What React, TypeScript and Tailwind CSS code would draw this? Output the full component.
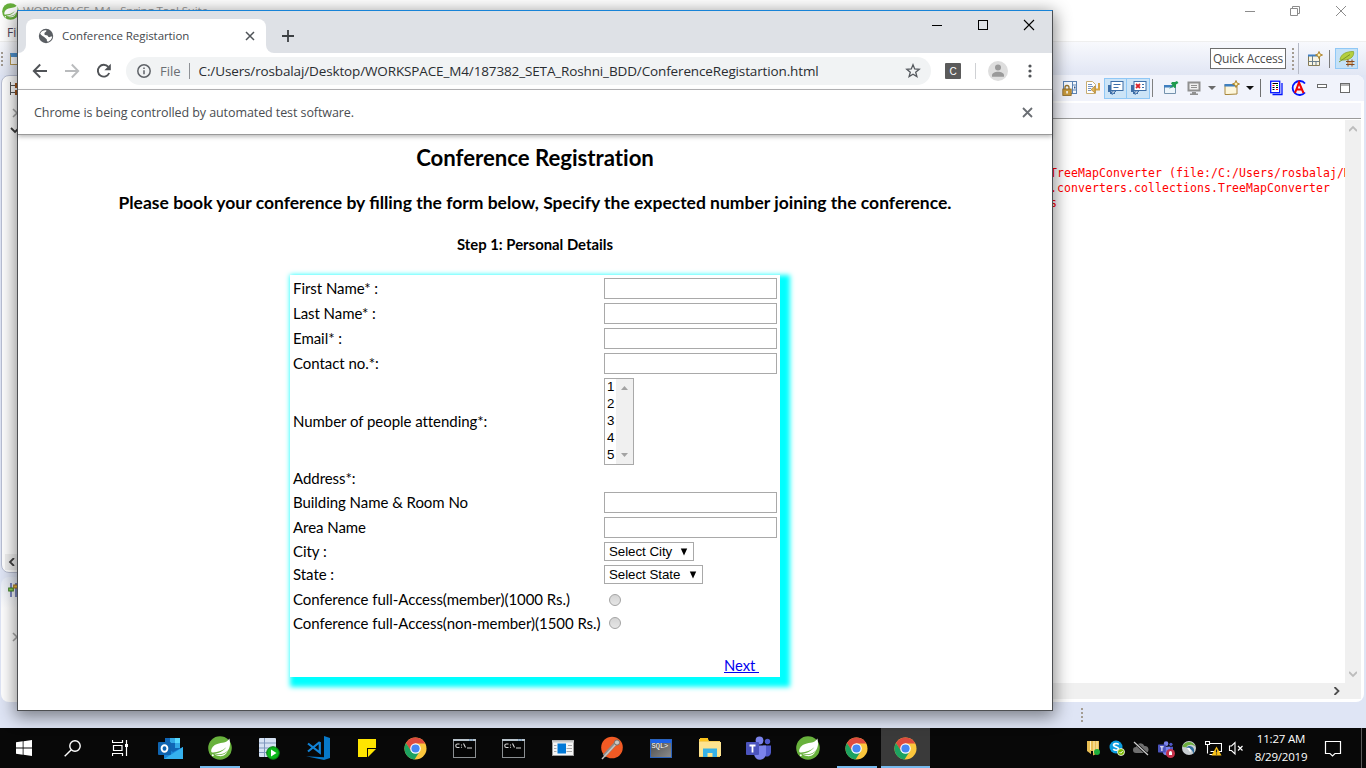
import type { ReactNode } from "react";

type SvgProps = { size?: number; box?: number; className?: string; children: ReactNode };

function Svg({ size = 16, box = 16, className = "", children }: SvgProps) {
  return (
    <svg width={size} height={size} viewBox={`0 0 ${box} ${box}`} fill="none" className={`block shrink-0 ${className}`}>
      {children}
    </svg>
  );
}

/* ---------- shared logos ---------- */

function SpringLogo({ size = 24 }: { size?: number }) {
  return (
    <Svg size={size} box={24}>
      <circle cx="12" cy="12" r="11.8" fill="#68b13c" />
      <path d="M21.4 2.6c.5 2.6 1.4 6.800-.6 10.400-2.500 4.700-8 5.600-12.400 5.300-1.600-.1-2.800-.3-2.800-.3 4.700-.5 9.700-2.600 12.600-6.800-3.400 3.300-8.300 4.900-13 5.200-.8.100-1.900 0-2-.9-.3-3.600 2.600-6.600 6-7.600 4.700-1.400 9.400-.3 12.200-5.300z" fill="#fff" />
      <path d="M6.500 18.200c5 1.800 10.500.8 13.300-3.400-1.500 4.500-6.500 7.500-13.300 3.400z" fill="#fff" />
      <circle cx="4.800" cy="19.300" r="1" fill="#fff" />
    </Svg>
  );
}

function ChromeLogo() {
  return (
    <Svg size={23} box={24}>
      <circle cx="12" cy="12" r="11.500" fill="#fbc63c" />
      <path d="M12 .5A11.500 11.500 0 0 0 2 6.300L7.200 15 12 6.800h10.300A11.500 11.500 0 0 0 12 .5z" fill="#dd4b3e" />
      <path d="M2 6.300A11.500 11.500 0 0 0 11 23.500L16.600 14.700 7.400 14.700z" fill="#1da261" />
      <circle cx="12" cy="12" r="5.500" fill="#fff" />
      <circle cx="12" cy="12" r="4.300" fill="#4587f3" />
    </Svg>
  );
}

function TeamsLogo({ size = 25 }: { size?: number }) {
  return (
    <Svg size={size} box={25}>
      <circle cx="13.500" cy="4.500" r="3.900" fill="#7b83eb" />
      <circle cx="21.500" cy="5.500" r="2.700" fill="#5059c9" />
      <path d="M17 9.500h8v7a4 4 0 0 1-6 3.500z" fill="#5059c9" />
      <path d="M8 9.500h12v8a6 6 0 0 1-12 .5z" fill="#7b83eb" />
      <rect x="0" y="6" width="13" height="13" rx="1" fill="#4b53bc" />
      <path d="M3.500 9.500h6M6.500 9.500v7" stroke="#fff" strokeWidth="1.800" />
    </Svg>
  );
}

/* ---------- IDE behind the browser ---------- */

function DropArrow({ color }: { color: string }) {
  return (
    <Svg size={8} box={8}>
      <path d="M0 2h8L4 6z" fill={color} />
    </Svg>
  );
}

function GripDots({ count, className = "" }: { count: number; className?: string }) {
  return (
    <div className={`flex flex-col gap-[2px] ${className}`}>
      {Array.from({ length: count }, (_, i) => (
        <span key={i} className="block size-[2px] bg-[#a39c92]" />
      ))}
    </div>
  );
}

function ConsoleMonitor({ error }: { error?: boolean }) {
  return (
    <Svg size={17} box={17}>
      <path d="M1 5h3v7H1zM3 12h5v2H3z" fill="#3d6ea8" />
      <rect x="4" y="1.500" width="12" height="9" fill="#fff" stroke="#3d6ea8" />
      <path d="M5 11v3.500L9 11z" fill="#fff" stroke="#3d6ea8" />
      {error ? (
        <>
          <path d="M6 4l4 4M10 4l-4 4" stroke="#d9232b" strokeWidth="1.800" />
          <path d="M12 4.500h2M12 7.500h2" stroke="#3d6ea8" />
        </>
      ) : (
        <path d="M6.500 4.500h7M6.500 7.500h5" stroke="#3d6ea8" />
      )}
    </Svg>
  );
}

function NewWindowIcon() {
  return (
    <Svg size={16}>
      <path d="M1 4.500h12v9.500l-9 .5H1z" fill="#fdf6dc" stroke="#a8873c" />
      <path d="M.5 4h11v2.500H.5z" fill="#3f7fc0" />
      <path d="M12 .5l1 2.500 2.500 1-2.500 1-1 2.500-1-2.500-2.500-1 2.500-1z" fill="#fff3b0" stroke="#a87b1e" strokeWidth=".9" />
    </Svg>
  );
}

function ConsoleToolbar() {
  return (
    <div className="flex h-[26px] items-center justify-end bg-[#f1f3fb] pr-2">
      <div className="flex w-[23px] justify-center">
        <Svg size={16}>
          <rect x="1.500" y="1.500" width="13" height="12" fill="#f4f8fd" stroke="#5a82b4" />
          <path d="M10.500 1.500v12M10.500 5h4M10.500 10h4" stroke="#5a82b4" />
          <rect x="12" y="6.500" width="1.500" height="2" fill="#34558b" />
          <path d="M3 9.500V7.500a2 2 0 0 1 4 0v2" stroke="#93702a" strokeWidth="1.300" />
          <rect x=".8" y="9" width="8.400" height="6.500" fill="#c89a3c" stroke="#8a6520" strokeWidth=".8" />
          <rect x="4.300" y="11" width="1.500" height="2.500" fill="#fff" />
        </Svg>
      </div>
      <div className="flex w-[23px] justify-center">
        <Svg size={16}>
          <path d="M1.500 1.500h6l3 3v9h-9z" fill="#fff" stroke="#c8ad72" />
          <path d="M3 4.500h4M3 6.500h5M3 8.500h3M3 10.500h3" stroke="#7492c0" />
          <path d="M14 3v6.500H9" stroke="#d6a544" strokeWidth="2" />
          <path d="M10 6l-4 3.500 4 3.500z" fill="#e2b556" stroke="#a97d2b" strokeWidth=".7" />
        </Svg>
      </div>
      <div className="flex h-[21px] w-[23px] items-center justify-center border border-[#90c8f6] bg-[#cce4f7]">
        <ConsoleMonitor />
      </div>
      <div className="flex h-[21px] w-[23px] items-center justify-center border border-l-0 border-[#90c8f6] bg-[#cce4f7]">
        <ConsoleMonitor error />
      </div>
      <div className="ml-[2px] h-[18px] w-px bg-[#808080]" />
      <div className="ml-[6px] flex w-[23px] justify-center">
        <Svg size={16}>
          <path d="M1.500 5.500h11v8h-11z" fill="#eef5fb" stroke="#7592ad" />
          <path d="M1 5h9v2.500H1z" fill="#3f7fc0" />
          <path d="M14 1l1.500 2-2.500 1.500v3L11.500 8 10 6.500 6 9l3.500-4L8 3.500 9 2h3z" fill="#1f9b4e" />
        </Svg>
      </div>
      <div className="flex w-[23px] justify-center">
        <Svg size={16}>
          <rect x="2.500" y="2.500" width="11" height="8" fill="#f0f0f0" stroke="#909090" strokeWidth="2" />
          <path d="M5 5.500h6M5 7.500h6" stroke="#909090" />
          <path d="M6 12h4v1.500h2V15H4v-1.500h2z" fill="#909090" />
        </Svg>
      </div>
      <div className="flex w-[14px] justify-center">
        <DropArrow color="#6b6b6b" />
      </div>
      <div className="ml-[2px] flex w-[22px] justify-center">
        <NewWindowIcon />
      </div>
      <div className="flex w-[14px] justify-center">
        <DropArrow color="#111111" />
      </div>
      <div className="ml-[3px] h-[18px] w-px bg-[#707070]" />
      <div className="ml-[4px] flex w-[22px] justify-center">
        <Svg size={16}>
          <path d="M4.500 14.500h9.500v-11.500" stroke="#0014ff" strokeWidth="1.300" />
          <rect x="2.700" y="1.200" width="9" height="11.500" fill="#fff" stroke="#0014ff" strokeWidth="1.300" />
          <path d="M4.500 3.500h5.500M4.500 7.500h2M8 7.500h2M4.500 9.500h2" stroke="#000" />
          <path d="M4.500 5.500h2M8 9.500h2" stroke="#f00" />
          <path d="M8 5.500h2" stroke="#0a0" />
        </Svg>
      </div>
      <div className="flex w-[23px] justify-center">
        <Svg size={16}>
          <path d="M14 3.500A7 7 0 1 0 14 12.500" stroke="#0014ff" strokeWidth="1.800" />
          <path d="M4 13L8 2.500 12.500 13M5.500 9.500h5.500" stroke="#f00000" strokeWidth="2" />
        </Svg>
      </div>
      <div className="ml-[1px] flex w-[22px] justify-center">
        <Svg size={16}>
          <rect x="3.500" y="4.500" width="9" height="3" fill="#fff" stroke="#6a6a6a" />
        </Svg>
      </div>
      <div className="flex w-[23px] justify-center">
        <Svg size={16}>
          <rect x="3.500" y="3.500" width="9" height="9" fill="#fff" stroke="#6a6a6a" />
          <path d="M3 5h10" stroke="#6a6a6a" />
        </Svg>
      </div>
    </div>
  );
}

function IdeWindow() {
  return (
    <div className="flex h-[728px] flex-col bg-[#dfe5f5] font-['Open_Sans',sans-serif]">
      {/* title and menu */}
      <div className="flex h-[42px] justify-between border-b border-[#efefef] bg-white">
        <div className="w-[300px]">
          <div className="flex h-[22px] items-center gap-1 pl-[2px]">
            <SpringLogo size={17} />
            <span className="text-[11.500px] tracking-[-0.15px] whitespace-nowrap text-[#999999]">WORKSPACE_M4 - Spring Tool Suite</span>
          </div>
          <div className="pt-[2px] pl-[7px] text-[12px] leading-[18px] text-[#50435a]">File</div>
        </div>
        <div className="flex h-[21px] items-center pr-[19px]">
          <Svg size={12} box={12}>
            <path d="M1 6.500h10" stroke="#8c8c8c" />
          </Svg>
          <Svg size={12} box={12} className="ml-[33px]">
            <path d="M1.500 3.500h7v7h-7zM3.500 3V1.500h7v7H9" stroke="#8c8c8c" />
          </Svg>
          <Svg size={12} box={12} className="ml-[34px]">
            <path d="M1 1l10 10M11 1L1 11" stroke="#8c8c8c" />
          </Svg>
        </div>
      </div>

      {/* main toolbar */}
      <div className="flex h-[33px] items-center justify-between bg-linear-to-b from-[#f8f9fd] to-[#e1e6f4]">
        <div className="flex items-center pl-[1px]">
          <GripDots count={4} />
          <div className="ml-[7px] h-[12px] w-[14px] border border-t-4 border-[#b99b55] border-t-[#4f93d0] bg-white" />
        </div>
        <div className="flex items-center">
          <div className="flex h-[21px] w-[76px] items-center justify-center border border-[#6e6e6e] bg-white text-[12px] tracking-[-0.16px] whitespace-nowrap text-[#4c4c4c]">
            Quick Access
          </div>
          <GripDots count={6} className="ml-[6px]" />
          <div className="ml-[4px] h-[31px] w-px bg-[#b6bac6]" />
          <div className="ml-[8px]">
            <Svg size={16}>
              <path d="M1.500 4.500h11v10h-11z" fill="#f8f4e2" stroke="#857b55" />
              <path d="M1 4.500h10" stroke="#3f7fc0" strokeWidth="2" />
              <path d="M5.500 5v9M1.500 10.500h11M9 10v4" stroke="#6b7f8d" />
              <path d="M12 .5l1 2.500 2.500 1-2.500 1-1 2.500-1-2.500-2.500-1 2.500-1z" fill="#fff3b0" stroke="#a87b1e" strokeWidth=".9" />
            </Svg>
          </div>
          <div className="ml-[6px] h-[18px] w-px bg-[#7b7b7b]" />
          <div className="ml-[5px] flex h-[21px] w-[23px] items-center justify-center border border-[#90c8f6] bg-[#c4e1f7]">
            <Svg size={18} box={18}>
              <path d="M2 9.500C3 4 8 1.500 15.500 1.500c1 4-2 8-9 8.500-2 .2-3.500.2-4.500-.5z" fill="#b4cf3e" stroke="#8aa62c" strokeWidth=".8" />
              <path d="M1 12L12 4.500" stroke="#7c9629" />
              <path d="M10 9.500v7M14 9.500v7M8 11.500h8.500M8 14.500h8.500" stroke="#8a4a1a" />
              <path d="M10.500 12h3v2h-3z" fill="#e6b27a" />
            </Svg>
          </div>
          <div className="w-[8px]" />
        </div>
      </div>

      {/* work area */}
      <div className="flex h-[627px] justify-between pr-[2px] pl-[1px]">
        <div className="flex w-[200px] flex-col gap-[4px]">
          <div className="flex h-[498px] flex-col rounded-tl-lg rounded-bl-lg border border-[#b9bfd3] bg-white pl-[3px]">
            <Svg size={15} box={15} className="ml-[4px] mt-[6px]">
              <path d="M1.500 0v13M1.500 3.500h5M1.500 10.500h5" stroke="#555" />
              <path d="M6 1h5v5H6zM6 8h5v5H6z" fill="#a4571c" />
            </Svg>
            <Svg size={10} box={10} className="mt-[11px] ml-[6px]">
              <path d="M2 1l4 4-4 4" stroke="#a8a8a8" strokeWidth="1.600" />
            </Svg>
            <Svg size={10} box={10} className="mt-[8px] ml-[5px]">
              <path d="M1 2l4 4 4-4" stroke="#3c3c3c" strokeWidth="1.800" />
            </Svg>
            <div className="mt-auto mb-[2px] flex h-[16px] items-center bg-[#f0f0f0] pl-[3px]">
              <Svg size={8} box={8}>
                <path d="M6 0L2 4l4 4" stroke="#404040" strokeWidth="1.800" />
              </Svg>
            </div>
          </div>
          <div className="flex h-[125px] flex-col rounded-l-lg bg-linear-to-b from-[#e6ebf6] to-white to-25% pl-[7px]">
            <Svg size={16} className="mt-[6px]">
              <path d="M3 0v14M8 0v14M12.500 2v12" stroke="#33439b" strokeWidth="1.200" />
              <rect x=".7" y="5" width="4.600" height="3" fill="#8fcf5a" stroke="#3a7d1f" />
              <rect x="5.700" y="2" width="4.600" height="3" fill="#f2c04c" stroke="#a3741a" />
            </Svg>
            <Svg size={10} box={10} className="mt-[33px] ml-[3px]">
              <path d="M2 1l4 4-4 4" stroke="#a8a8a8" strokeWidth="1.600" />
            </Svg>
          </div>
        </div>

        <div className="flex w-[364px] flex-col overflow-hidden rounded-tr-lg rounded-br-lg bg-white">
          <ConsoleToolbar />
          <div className="mt-[2px] mr-[3px] h-[16px] border-b border-[#9b9b9b] bg-[#f4f5fb]" />
          <div className="mr-[3px] flex h-[564px] pt-px">
            <div className="w-[345px] overflow-hidden pt-[46px] pl-[50px] font-['DejaVu_Sans_Mono',monospace] text-[11.500px] leading-[15px] tracking-[0.077px] whitespace-pre text-[#ff0000]">
              <div>TreeMapConverter (file:/C:/Users/rosbalaj/M</div>
              <div>.converters.collections.TreeMapConverter</div>
              <div>s</div>
            </div>
            <div className="flex w-[16px] flex-col items-center justify-between bg-[#f0f0f0] py-[5px]">
              <Svg size={8} box={8}>
                <path d="M0 6l4-4 4 4" stroke="#bcbcbc" strokeWidth="1.800" />
              </Svg>
              <Svg size={8} box={8}>
                <path d="M0 2l4 4 4-4" stroke="#bcbcbc" strokeWidth="1.800" />
              </Svg>
            </div>
          </div>
          <div className="mr-[3px] flex h-[16px] items-center justify-end bg-[#f0f0f0] pr-[20px]">
            <Svg size={8} box={8}>
              <path d="M1.500 0l4 4-4 4" stroke="#505050" strokeWidth="1.800" />
            </Svg>
          </div>
        </div>
      </div>

      {/* status line */}
      <div className="flex h-[26px] items-center pl-[1081px]">
        <GripDots count={4} />
      </div>
    </div>
  );
}

/* ---------- browser ---------- */

function TabStrip() {
  return (
    <div className="flex h-[42px] justify-between bg-[#dee1e6]">
      <div className="flex items-end">
        <div className="h-[8px] w-[8px] bg-white">
          <div className="h-full w-full rounded-br-lg bg-[#dee1e6]" />
        </div>
        <div className="flex h-[34px] w-[240px] items-center rounded-t-lg bg-white pl-[12px]">
          <Svg size={16}>
            <circle cx="8" cy="8" r="7.200" fill="#5a5e63" />
            <path d="M2.200 5.500C3.500 3 5.500 2 8.200 2.200c.6 1-.2 1.900-1.400 2.200-.4 1.200-.8 2 .3 2.500 1.500.2 2.600.2 3 1.400.2 1.200 1.600 1 2.300.5.500-.5 1.200-.5 1.800-.2-.3 2.300-1.800 4.300-4.100 5.200-1.100-.5-1.500-1.500-1.300-2.600-1.100-.8-1.900-1.600-2.900-2.400C4.500 7.900 3.200 7.500 2.200 5.500z" fill="#fff" />
          </Svg>
          <span className="ml-[8px] w-[183px] text-[11.500px] tracking-[-0.08px] whitespace-nowrap text-[#45494e]">Conference Registartion</span>
          <Svg size={10} box={10}>
            <path d="M1 1l8 8M9 1L1 9" stroke="#4f5358" strokeWidth="1.500" />
          </Svg>
        </div>
        <div className="h-[8px] w-[8px] bg-white">
          <div className="h-full w-full rounded-bl-lg bg-[#dee1e6]" />
        </div>
        <Svg size={12} box={12} className="mb-[11px] ml-[8px]">
          <path d="M6 0v12M0 6h12" stroke="#3c4043" strokeWidth="1.800" />
        </Svg>
      </div>
      <div className="flex h-[28px] items-center pr-[17px]">
        <Svg size={12} box={12}>
          <path d="M1 6.500h10" stroke="#000" />
        </Svg>
        <Svg size={12} box={12} className="ml-[34px]">
          <rect x="1.500" y="1.500" width="9" height="9" stroke="#000" />
        </Svg>
        <Svg size={12} box={12} className="ml-[34px]">
          <path d="M1 1l10 10M11 1L1 11" stroke="#000" strokeWidth="1.100" />
        </Svg>
      </div>
    </div>
  );
}

function AddressBar() {
  return (
    <div className="flex h-[37px] items-center border-b border-[#b4b4b6] bg-white pl-[14px]">
      <Svg size={16}>
        <path d="M15 8H2M8.200 1.500L1.800 8l6.400 6.500" stroke="#505357" strokeWidth="1.900" />
      </Svg>
      <Svg size={16} className="ml-[16px]">
        <path d="M1 8h13M7.800 1.500L14.200 8l-6.400 6.500" stroke="#b9bbbd" strokeWidth="1.900" />
      </Svg>
      <Svg size={16} className="ml-[16px]">
        <path d="M13.200 10A5.900 5.900 0 1 1 12.300 3.900" stroke="#505357" strokeWidth="1.900" />
        <path d="M14.800 .8v6.400H8.400z" fill="#505357" />
      </Svg>
      <div className="ml-[14px] flex h-[28px] w-[805px] items-center rounded-full bg-[#f1f3f4] pl-[11px]">
        <Svg size={14} box={14}>
          <circle cx="7" cy="7" r="6.200" stroke="#5f6368" strokeWidth="1.500" />
          <path d="M7 6.200v4M7 3.500v1.500" stroke="#5f6368" strokeWidth="1.500" />
        </Svg>
        <span className="ml-[9px] text-[13px] leading-[18px] text-[#6a6e73]">File</span>
        <div className="ml-[8px] h-[16px] w-px bg-[#8f9296]" />
        <span className="ml-[9px] w-[707px] text-[13.500px] leading-[18px] tracking-[-0.133px] whitespace-nowrap text-[#2a2d31]">
          C:/Users/rosbalaj/Desktop/WORKSPACE_M4/187382_SETA_Roshni_BDD/ConferenceRegistartion.html
        </span>
        <Svg size={16} className="-ml-px">
          <path d="M8 1.800l1.700 4.200 4.500.3-3.500 2.900 1.200 4.400L8 11.200l-3.900 2.400 1.200-4.400L1.800 6.300l4.500-.3z" stroke="#55595e" strokeWidth="1.300" />
        </Svg>
      </div>
      <div className="ml-[14px] flex size-[16px] items-center justify-center rounded-[1px] bg-[#5b5b5b] font-['Liberation_Sans',sans-serif] text-[10px] text-white">
        C
      </div>
      <div className="ml-[14px] h-[16px] w-px bg-[#cfd1d4]" />
      <Svg size={20} box={20} className="ml-[12px]">
        <circle cx="10" cy="10" r="10" fill="#dedede" />
        <circle cx="10" cy="6.500" r="3" fill="#9a9a9a" />
        <path d="M4 14.500c0-5 12-5 12 0v1.200H4z" fill="#9a9a9a" />
      </Svg>
      <Svg size={16} className="ml-[14px]">
        <circle cx="8" cy="3" r="1.600" fill="#505357" />
        <circle cx="8" cy="8" r="1.600" fill="#505357" />
        <circle cx="8" cy="13" r="1.600" fill="#505357" />
      </Svg>
    </div>
  );
}

function InfoBar() {
  return (
    <div className="z-10 flex h-[45px] items-center justify-between border-b border-[#9a9a9a] bg-white pr-[19px] pl-[16px] shadow-[0_2px_4px_rgba(0,0,0,0.25)]">
      <span className="pt-[2px] text-[12.500px] tracking-[-0.08px] text-[#4a4d51]">Chrome is being controlled by automated test software.</span>
      <Svg size={11} box={11}>
        <path d="M1 1l9 9M10 1L1 10" stroke="#6a6e73" strokeWidth="1.800" />
      </Svg>
    </div>
  );
}

function Row({ label, height, children }: { label: string; height: string; children?: ReactNode }) {
  return (
    <div className={`flex items-center ${height}`}>
      <span className="w-[311px] pb-px whitespace-nowrap">{label}</span>
      {children}
    </div>
  );
}

function TextBox() {
  return <input type="text" className="h-[21px] w-[173px] border border-[#a9a9a9] bg-white outline-none" />;
}

function DropDown({ text, width }: { text: string; width: string }) {
  return (
    <div
      className={`flex h-[19px] items-center justify-between border border-[#a9a9a9] bg-white pr-[5px] pl-[4px] font-['Liberation_Sans',sans-serif] text-[13.333px] leading-[17px] tracking-[-0.05px] whitespace-nowrap ${width}`}
    >
      {text}
      <Svg size={8} box={8}>
        <path d="M.8 .5h6.400L4 7.500z" fill="#000" />
      </Svg>
    </div>
  );
}

function Radio() {
  return <span className="ml-[5px] block size-[12px] rounded-full border border-[#a3a3a3] bg-linear-to-b from-[#d4d4d4] to-[#e6e6e6]" />;
}

function ConferencePage() {
  return (
    <div className="flex h-[575px] flex-col items-center bg-white font-['Lato',sans-serif] text-black">
      <h1 className="mt-[8px] text-[22.200px] leading-[30px] font-bold tracking-[-0.020px]">Conference Registration</h1>
      <h3 className="mt-[18px] text-[17.500px] leading-[24px] font-bold whitespace-nowrap">
        Please book your conference by filling the form below, Specify the expected number joining the conference.
      </h3>
      <h4 className="mt-[19px] text-[14.860px] leading-[20px] font-bold">Step 1: Personal Details</h4>
      <form className="mt-[21px] flex h-[402px] w-[490px] flex-col bg-white pt-px pl-[3px] text-[15px] leading-[18px] tracking-[-0.050px] shadow-[5px_5px_5px_5px_cyan]">
        <Row label="First Name* :" height="h-[25px]">
          <TextBox />
        </Row>
        <Row label="Last Name* :" height="h-[25px]">
          <TextBox />
        </Row>
        <Row label="Email* :" height="h-[25px]">
          <TextBox />
        </Row>
        <Row label="Contact no.*:" height="h-[25px]">
          <TextBox />
        </Row>
        <Row label="Number of people attending*:" height="h-[91px]">
          <div className="flex h-[87px] w-[30px] border border-[#a9a9a9] bg-white">
            <div className="-mt-px w-[11px] pl-[2px] font-['Liberation_Sans',sans-serif] text-[13.333px] leading-[17px] tracking-normal">
              {["1", "2", "3", "4", "5"].map((n) => (
                <div key={n}>{n}</div>
              ))}
            </div>
            <div className="flex flex-1 flex-col items-center justify-between bg-[#f0f0f0] py-[6px]">
              <Svg size={7} box={7}>
                <path d="M0 5h7L3.500 1z" fill="#a3a3a3" />
              </Svg>
              <Svg size={7} box={7}>
                <path d="M0 2h7L3.500 6z" fill="#a3a3a3" />
              </Svg>
            </div>
          </div>
        </Row>
        <Row label="Address*:" height="h-[23px]" />
        <Row label="Building Name & Room No" height="h-[25px]">
          <TextBox />
        </Row>
        <Row label="Area Name" height="h-[25px]">
          <TextBox />
        </Row>
        <Row label="City :" height="h-[23px]">
          <DropDown text="Select City" width="w-[90px]" />
        </Row>
        <Row label="State :" height="h-[23px]">
          <DropDown text="Select State" width="w-[99px]" />
        </Row>
        <Row label="Conference full-Access(member)(1000 Rs.)" height="h-[27px]">
          <Radio />
        </Row>
        <Row label="Conference full-Access(non-member)(1500 Rs.)" height="h-[20px]">
          <Radio />
        </Row>
        <div className="mt-[21px] flex h-[21px] items-center justify-end pr-[21px]">
          <a href="#next" className="text-[14.800px] whitespace-pre text-[#0000ee] underline">
            {"Next "}
          </a>
        </div>
      </form>
    </div>
  );
}

function BrowserWindow() {
  return (
    <div className="absolute top-[10px] left-[17px] flex h-[701px] w-[1036px] flex-col border border-[#4d4f52] border-t-[#1883d7] bg-white font-['Open_Sans',sans-serif] shadow-[0_4px_16px_2px_rgba(0,0,0,0.45)]">
      <TabStrip />
      <AddressBar />
      <InfoBar />
      <ConferencePage />
    </div>
  );
}

/* ---------- taskbar ---------- */

function CmdIcon() {
  return (
    <Svg size={23} box={23}>
      <rect x=".5" y="2.500" width="22" height="18" fill="#050505" stroke="#8b8f92" />
      <path d="M0 3h23" stroke="#b9c4cc" strokeWidth="2" />
      <path d="M16 3h1.500M18.500 3H20" stroke="#4678a8" />
      <path d="M6.500 7h-2a1.500 1.500 0 0 0 0 3.500h2M8.500 7.500v1M8.500 9.800v1M10.500 6.500l2 4M14 11h5" stroke="#d8d8d8" strokeWidth="1.100" />
    </Svg>
  );
}

const apps: { name: string; icon: ReactNode; state?: "open" | "active" }[] = [
  {
    name: "outlook",
    icon: (
      <Svg size={25} box={25}>
        <path d="M7 2h15v14H7z" fill="#1066b5" />
        <path d="M12 2h5v5h-5zM17 7h5v5h-5z" fill="#32a9e7" />
        <path d="M17 2h5v5h-5z" fill="#58d9fd" />
        <path d="M6 11l9 5 10-5v12H6z" fill="#1a86d9" />
        <path d="M25 11v12H6z" fill="#35b1ee" />
        <rect x="0" y="6" width="13" height="13" rx="1" fill="#0f64b0" />
        <ellipse cx="6.500" cy="12.500" rx="2.900" ry="3.300" stroke="#fff" strokeWidth="1.900" />
      </Svg>
    ),
  },
  { name: "sts", icon: <SpringLogo />, state: "open" },
  {
    name: "sql-developer",
    icon: (
      <Svg size={23} box={23}>
        <rect x="2" y="1" width="17" height="19" rx="1" fill="#d5e1f2" />
        <path d="M2 6h17M2 11h17M2 15.500h17M7.500 1v19" stroke="#7f97bd" />
        <circle cx="16" cy="16" r="6.300" fill="#0cb71b" stroke="#057d10" />
        <path d="M14 12.500l5.500 3.500-5.500 3.500z" fill="#fff" />
      </Svg>
    ),
  },
  {
    name: "vscode",
    icon: (
      <Svg size={24} box={24}>
        <path d="M18 0l6 2v20l-6 2L0 20.300l18 .9z" fill="#0779c9" />
        <path d="M13.800 6v10.500L2 7.500M13.800 6L2 15.500" stroke="#1283d6" strokeWidth="2.200" />
      </Svg>
    ),
  },
  {
    name: "sticky-notes",
    icon: (
      <Svg size={18} box={18}>
        <path d="M0 0h18v9H9v9H0z" fill="#ffe500" />
        <path d="M10 10h8l-8 8z" fill="#ffe500" />
      </Svg>
    ),
  },
  { name: "chrome", icon: <ChromeLogo /> },
  { name: "cmd-1", icon: <CmdIcon /> },
  { name: "cmd-2", icon: <CmdIcon /> },
  {
    name: "viewer",
    icon: (
      <Svg size={22} box={22}>
        <rect x=".5" y="3.500" width="21" height="15" fill="#f6f6f6" stroke="#9b9b9b" />
        <path d="M0 4.500h22" stroke="#c9c9c9" strokeWidth="2" />
        <path d="M2 8.500h2.500M2 11.500h2.500M2 14.500h2.500M16 8.500h4M14.500 11.500H20M14.500 14.500H20" stroke="#a8a8a8" />
        <rect x="5.500" y="6.500" width="8.500" height="10" fill="#0078d7" />
      </Svg>
    ),
  },
  {
    name: "postman",
    icon: (
      <Svg size={24} box={24}>
        <circle cx="12" cy="11.500" r="10.800" fill="#f15a24" />
        <path d="M4 20L16 7" stroke="#8d8b89" strokeWidth="3.400" />
        <path d="M2 23L16 8" stroke="#c7c5c2" strokeWidth="1.500" />
        <circle cx="17" cy="6.500" r="2.600" fill="#cac7c3" stroke="#75706c" />
      </Svg>
    ),
  },
  {
    name: "sqlplus",
    icon: (
      <div className="flex h-[19px] w-[22px] flex-col border border-[#2a63bd] bg-linear-to-br from-[#4b4b4b] to-[#8b8b8b]">
        <div className="h-[3px] bg-[#1d62e8]" />
        <span className="pl-px font-['Liberation_Mono',monospace] text-[7px] leading-[7px] text-white">SQL&gt;</span>
      </div>
    ),
  },
  {
    name: "explorer",
    icon: (
      <Svg size={22} box={22}>
        <path d="M0 2h9l1 2h11v16H0z" fill="#f5cd5b" />
        <path d="M1 1h8v3H1z" fill="#fbc21c" />
        <path d="M0 5h22v14H0z" fill="#fde38f" />
        <path d="M4 20v-8.500h14V20h-4.500v-4h-5v4z" fill="#35b1e6" />
      </Svg>
    ),
  },
  { name: "teams", icon: <TeamsLogo /> },
  { name: "spring", icon: <SpringLogo /> },
  { name: "chrome-driver", icon: <ChromeLogo />, state: "open" },
  { name: "chrome-test", icon: <ChromeLogo />, state: "active" },
];

function Taskbar() {
  return (
    <div className="flex h-[40px] bg-[#080808] font-['Open_Sans',sans-serif] text-white">
      <div className="flex w-[48px] items-center justify-center">
        <Svg size={16}>
          <path d="M0 2.300l6.700-1v6.200H0zM7.500 1.200L16 0v7.500H7.500zM0 8.500h6.700v6.200L0 13.700zM7.500 8.500H16V16l-8.500-1.200z" fill="#fff" />
        </Svg>
      </div>
      <div className="flex w-[48px] items-center justify-center">
        <Svg size={17} box={17}>
          <circle cx="11" cy="6" r="5.200" stroke="#fff" strokeWidth="1.400" />
          <path d="M7.300 9.700L.7 16.300" stroke="#fff" strokeWidth="1.400" />
        </Svg>
      </div>
      <div className="mr-[2px] flex w-[48px] items-center justify-center">
        <Svg size={16}>
          <path d="M.5 0v2.500h10V0M.5 16v-2.500h10V16M1.500 5.500h8.500v5H1.500zM14.500 0v16" stroke="#fff" strokeWidth="1.200" />
          <path d="M13 4h3v3h-3z" fill="#fff" />
        </Svg>
      </div>
      {apps.map((app) => (
        <div key={app.name} className={`flex w-[49px] flex-col items-center ${app.state === "active" ? "bg-[#3a3a3a]" : ""}`}>
          <div className="flex h-[38px] items-center pt-[2px]">{app.icon}</div>
          {app.state && <div className={`h-[2px] bg-[#76b9ed] ${app.state === "active" ? "w-full" : "w-[40px]"}`} />}
        </div>
      ))}
      <div className="ml-auto flex items-center">
        <div className="flex w-[24px] justify-center">
          <Svg size={16}>
            <path d="M2 1h12v9l-3 4-3 1.500V11H6v3L2 11z" fill="#e8bd53" />
            <path d="M5.500 1v9M9 1v12M12 1v9" stroke="#fff0bd" />
            <circle cx="12" cy="12" r="3" fill="#1fae3c" />
          </Svg>
        </div>
        <div className="flex w-[24px] justify-center">
          <Svg size={16}>
            <circle cx="7" cy="7" r="6.500" fill="#0a9ce0" />
            <path d="M9.800 4.500C8 2.800 4.300 3.500 4.600 5.400 4.900 7.200 9.500 6.600 9.500 8.800c0 1.800-3.700 2-5.200.3" stroke="#fff" strokeWidth="1.700" />
            <circle cx="12" cy="12" r="3.500" fill="#7ab800" stroke="#fff" strokeWidth=".8" />
            <path d="M10.500 12l1.200 1.200 2-2.200" stroke="#fff" />
          </Svg>
        </div>
        <div className="flex w-[24px] justify-center">
          <Svg size={16}>
            <path d="M3 13a3 3 0 0 1 0-6 4.500 4.500 0 0 1 8.500-1A3.600 3.600 0 0 1 13 13z" fill="#6f6f6f" />
            <path d="M1 2l14 13" stroke="#080808" strokeWidth="2.600" />
            <path d="M1 2l14 13" stroke="#d0d0d0" strokeWidth="1.200" />
          </Svg>
        </div>
        <div className="flex w-[24px] items-center justify-center">
          <div className="relative">
            <TeamsLogo size={15} />
            <span className="absolute -right-[2px] -bottom-[2px] flex size-[9px] items-center justify-center rounded-full bg-[#c4314b]">
              <span className="block h-[4px] w-[3px] rounded-t-full bg-white" />
            </span>
          </div>
        </div>
        <div className="flex w-[24px] justify-center">
          <Svg size={16}>
            <circle cx="8" cy="8" r="7" fill="#c9ced3" />
            <path d="M1.500 6c3-6 11-5 13 .5-3-2.500-8-2.500-9 .5-2 .5-3.500.3-4-1z" fill="#6cae3e" />
            <path d="M5 7.500c4-4 11 0 7 7 .5-3.500-2-6-7-7z" fill="#2f6c9c" />
            <path d="M6 8c2.500-1 4.500 1 3.500 4.500z" fill="#fff" />
          </Svg>
        </div>
        <div className="flex w-[24px] justify-center">
          <Svg size={17} box={17}>
            <path d="M4 3.500h12.500v8H5.500M.5 1.500h4v3h-4zM2.500 4.500v9M4.500 14.500h5" stroke="#fff" strokeWidth="1.100" />
            <path d="M11.500 6.500l5 9h-10z" fill="#fcc419" />
            <path d="M11.500 9.500v3M11.500 13.500v1" stroke="#222" strokeWidth="1.200" />
          </Svg>
        </div>
        <div className="flex w-[22px] justify-center">
          <Svg size={16}>
            <path d="M1.500 6v4.500h2l3.500 3.500V2.500L3.500 6z" stroke="#fff" strokeWidth="1.100" />
            <path d="M10 6l4.500 4.500M14.500 6L10 10.500" stroke="#fff" strokeWidth="1.200" />
          </Svg>
        </div>
        <div className="ml-[4px] flex w-[60px] flex-col items-center text-[11.500px] leading-[18px] tracking-[-0.200px] whitespace-nowrap">
          <span>11:27 AM</span>
          <span>8/29/2019</span>
        </div>
        <Svg size={18} box={18} className="ml-[13px]">
          <path d="M1.500 2.500h15v12H11L8.500 17 6 14.500H1.500z" stroke="#fff" strokeWidth="1.200" />
        </Svg>
        <div className="mr-[4px] ml-[19px] h-[40px] w-px bg-[#5a5a5a]" />
      </div>
    </div>
  );
}

export default function App() {
  return (
    <div className="relative h-[768px] w-[1366px] overflow-hidden">
      <IdeWindow />
      <BrowserWindow />
      <Taskbar />
    </div>
  );
}
